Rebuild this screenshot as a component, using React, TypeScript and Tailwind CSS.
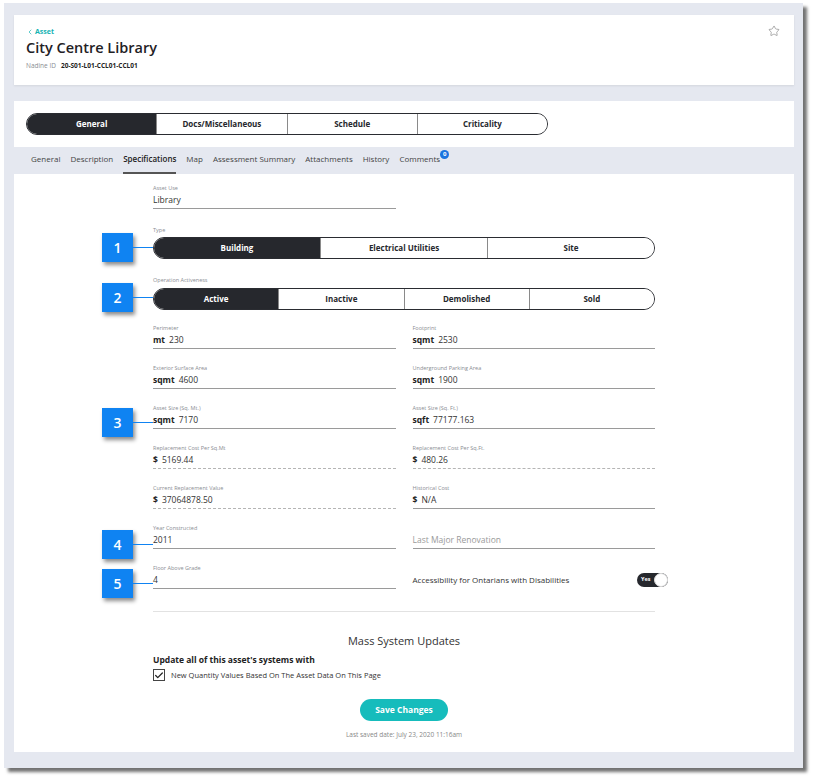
import { Star, ChevronLeft, Check } from 'lucide-react'

const font = { fontFamily: '"Open Sans", "Liberation Sans", sans-serif' }

type FieldProps = {
    label?: string
    unit?: string
    value?: string
    placeholder?: string
    dashed?: boolean
}

function Field ({ label, unit, value, placeholder, dashed }: FieldProps) {
    return (
        <div className='flex flex-col'>
            <p className='h-[8px] text-[5.5px] leading-[8px] text-[#8a8d93]'>{label}</p>
            <div className={`flex h-[17px] items-center gap-[4px] border-b ${dashed ? 'border-dashed border-[#b5b5b5]' : 'border-[#9a9a9a]'}`}>
                {unit && <span className='text-[8.5px] font-bold text-[#222]'>{unit}</span>}
                {value && <span className='text-[8.5px] text-[#333]'>{value}</span>}
                {placeholder && <span className='text-[8.5px] text-[#9a9a9a]'>{placeholder}</span>}
            </div>
        </div>
    )
}

function Callout ({ n, top }: { n: number, top: number }) {
    return (
        <div className='absolute left-[-51px] flex items-center' style={{ top }}>
            <div className='flex h-[29px] w-[31px] items-center justify-center bg-[#0f83f2] text-[14px] font-semibold text-white shadow-[2px_3px_4px_rgba(0,0,0,0.45)]'>{n}</div>
            <div className='h-px w-[20px] bg-[#0f83f2]' />
        </div>
    )
}

function Segmented ({ items, active }: { items: string[], active: number }) {
    return (
        <div className='flex h-[22px] w-full overflow-hidden rounded-full border border-[#2a2c31]'>
            {items.map((item, i) => (
                <div
                    key={item}
                    className={`flex flex-1 items-center justify-center text-[8px] font-bold ${i === active ? 'bg-[#26282d] text-white' : 'bg-white text-[#26282d]'} ${i > 0 ? 'border-l border-[#8a8a8a]' : ''}`}
                >
                    {item}
                </div>
            ))}
        </div>
    )
}

const subTabs = ['General', 'Description', 'Specifications', 'Map', 'Assessment Summary', 'Attachments', 'History', 'Comments']

export default function App () {
    return (
        <div className='min-h-screen bg-white pl-[4px] pr-[11px] pt-[3px] pb-[10px]' style={font}>
            <div className='bg-[#e5e8f0] pt-[12px] pl-[10px] pr-[9px] pb-[16px] shadow-[4px_4px_3px_rgba(0,0,0,0.55)]'>
                {/* header */}
                <div className='relative h-[70px] bg-white px-[12px] pt-[12px] shadow-[0_1px_2px_rgba(0,0,0,0.08)]'>
                    <div className='flex items-center gap-[1px] text-[#15b3b3]'>
                        <ChevronLeft size={8} strokeWidth={2} />
                        <span className='text-[7px] font-bold leading-[10px]'>Asset</span>
                    </div>
                    <h1 className='mt-[1px] text-[14.5px] font-semibold leading-[20px] text-[#1f2125]'>City Centre Library</h1>
                    <div className='mt-[3px] flex items-center gap-[5px] text-[6.5px]'>
                        <span className='text-[#8a8d93]'>Nadine ID</span>
                        <span className='font-bold text-[#222]'>20-S01-L01-CCL01-CCL01</span>
                    </div>
                    <Star className='absolute right-[14px] top-[10px] text-[#777]' size={12} strokeWidth={1.2} />
                </div>

                {/* main panel */}
                <div className='mt-[16px] bg-white pb-[12px]'>
                    <div className='px-[12px] pt-[12px]'>
                        <div className='w-[522px]'>
                            <Segmented items={['General', 'Docs/Miscellaneous', 'Schedule', 'Criticality']} active={0} />
                        </div>
                    </div>

                    <div className='mt-[12px] flex h-[27px] items-stretch gap-[10px] bg-[#e5e8f0] pl-[17px]'>
                        {subTabs.map(t => (
                            <div key={t} className={`relative flex items-center border-b-2 pb-[1px] text-[8px] ${t === 'Specifications' ? 'border-[#555] font-semibold text-[#222]' : 'border-transparent text-[#444]'}`}>
                                {t}
                                {t === 'Comments' && (
                                    <span className='absolute right-[-9px] top-[3px] flex h-[9px] w-[9px] items-center justify-center rounded-full bg-[#1a74e0] text-[6px] font-bold text-white'>0</span>
                                )}
                            </div>
                        ))}
                    </div>

                    <div className='relative ml-[139px] w-[502px] pt-[10px]'>
                        <Callout n={1} top={59} />
                        <Callout n={2} top={109} />
                        <Callout n={3} top={234} />
                        <Callout n={4} top={356} />
                        <Callout n={5} top={395} />

                        <div className='w-[243px]'>
                            <Field label='Asset Use' value='Library' />
                        </div>

                        <p className='mt-[17px] h-[8px] text-[5.5px] leading-[8px] text-[#8a8d93]'>Type</p>
                        <div className='mt-[3px]'>
                            <Segmented items={['Building', 'Electrical Utilities', 'Site']} active={0} />
                        </div>

                        <p className='mt-[17px] h-[8px] text-[5.5px] leading-[8px] text-[#8a8d93]'>Operation Activeness</p>
                        <div className='mt-[4px]'>
                            <Segmented items={['Active', 'Inactive', 'Demolished', 'Sold']} active={0} />
                        </div>

                        <div className='mt-[14px] grid grid-cols-2 gap-x-[17px] gap-y-[15px]'>
                            <Field label='Perimeter' unit='mt' value='230' />
                            <Field label='Footprint' unit='sqmt' value='2530' />
                            <Field label='Exterior Surface Area' unit='sqmt' value='4600' />
                            <Field label='Underground Parking Area' unit='sqmt' value='1900' />
                            <Field label='Asset Size (Sq. Mt.)' unit='sqmt' value='7170' />
                            <Field label='Asset Size (Sq. Ft.)' unit='sqft' value='77177.163' />
                            <Field label='Replacement Cost Per Sq.Mt' unit='$' value='5169.44' dashed />
                            <Field label='Replacement Cost Per Sq.Ft.' unit='$' value='480.26' dashed />
                            <Field label='Current Replacement Value' unit='$' value='37064878.50' dashed />
                            <Field label='Historical Cost' unit='$' value='N/A' />
                            <Field label='Year Constructed' value='2011' />
                            <Field placeholder='Last Major Renovation' />
                            <Field label='Floor Above Grade' value='4' />
                            <div className='flex items-center justify-between pt-[6px]'>
                                <span className='text-[8px] text-[#333]'>Accessibility for Ontarians with Disabilities</span>
                                <div className='mr-[-13px] flex h-[14px] w-[31px] items-center rounded-full bg-[#26282d] pl-[4px]'>
                                    <span className='text-[5.5px] font-bold text-white'>Yes</span>
                                    <span className='ml-auto h-[14px] w-[14px] rounded-full border border-[#ddd] bg-white' />
                                </div>
                            </div>
                        </div>

                        <div className='mt-[22px] border-t border-[#e2e2e2]' />

                        <p className='mt-[21px] text-center text-[11px] text-[#333]'>Mass System Updates</p>
                        <p className='mt-[4px] text-[8.5px] font-bold text-[#222]'>Update all of this asset&apos;s systems with</p>
                        <div className='mt-[3px] flex items-center gap-[6px]'>
                            <div className='flex h-[12px] w-[12px] items-center justify-center border border-[#444]'>
                                <Check size={11} strokeWidth={3} className='text-[#222]' />
                            </div>
                            <span className='text-[7.5px] text-[#333]'>New Quantity Values Based On The Asset Data On This Page</span>
                        </div>

                        <div className='mt-[18px] flex justify-center'>
                            <button className='flex h-[22px] w-[88px] items-center justify-center rounded-full bg-[#16bcbc] text-[8.5px] font-bold text-white'>Save Changes</button>
                        </div>
                        <p className='mt-[9px] text-center text-[6.5px] text-[#888]'>Last saved date: July 23, 2020 11:16am</p>
                    </div>
                </div>
            </div>
        </div>
    )
}
